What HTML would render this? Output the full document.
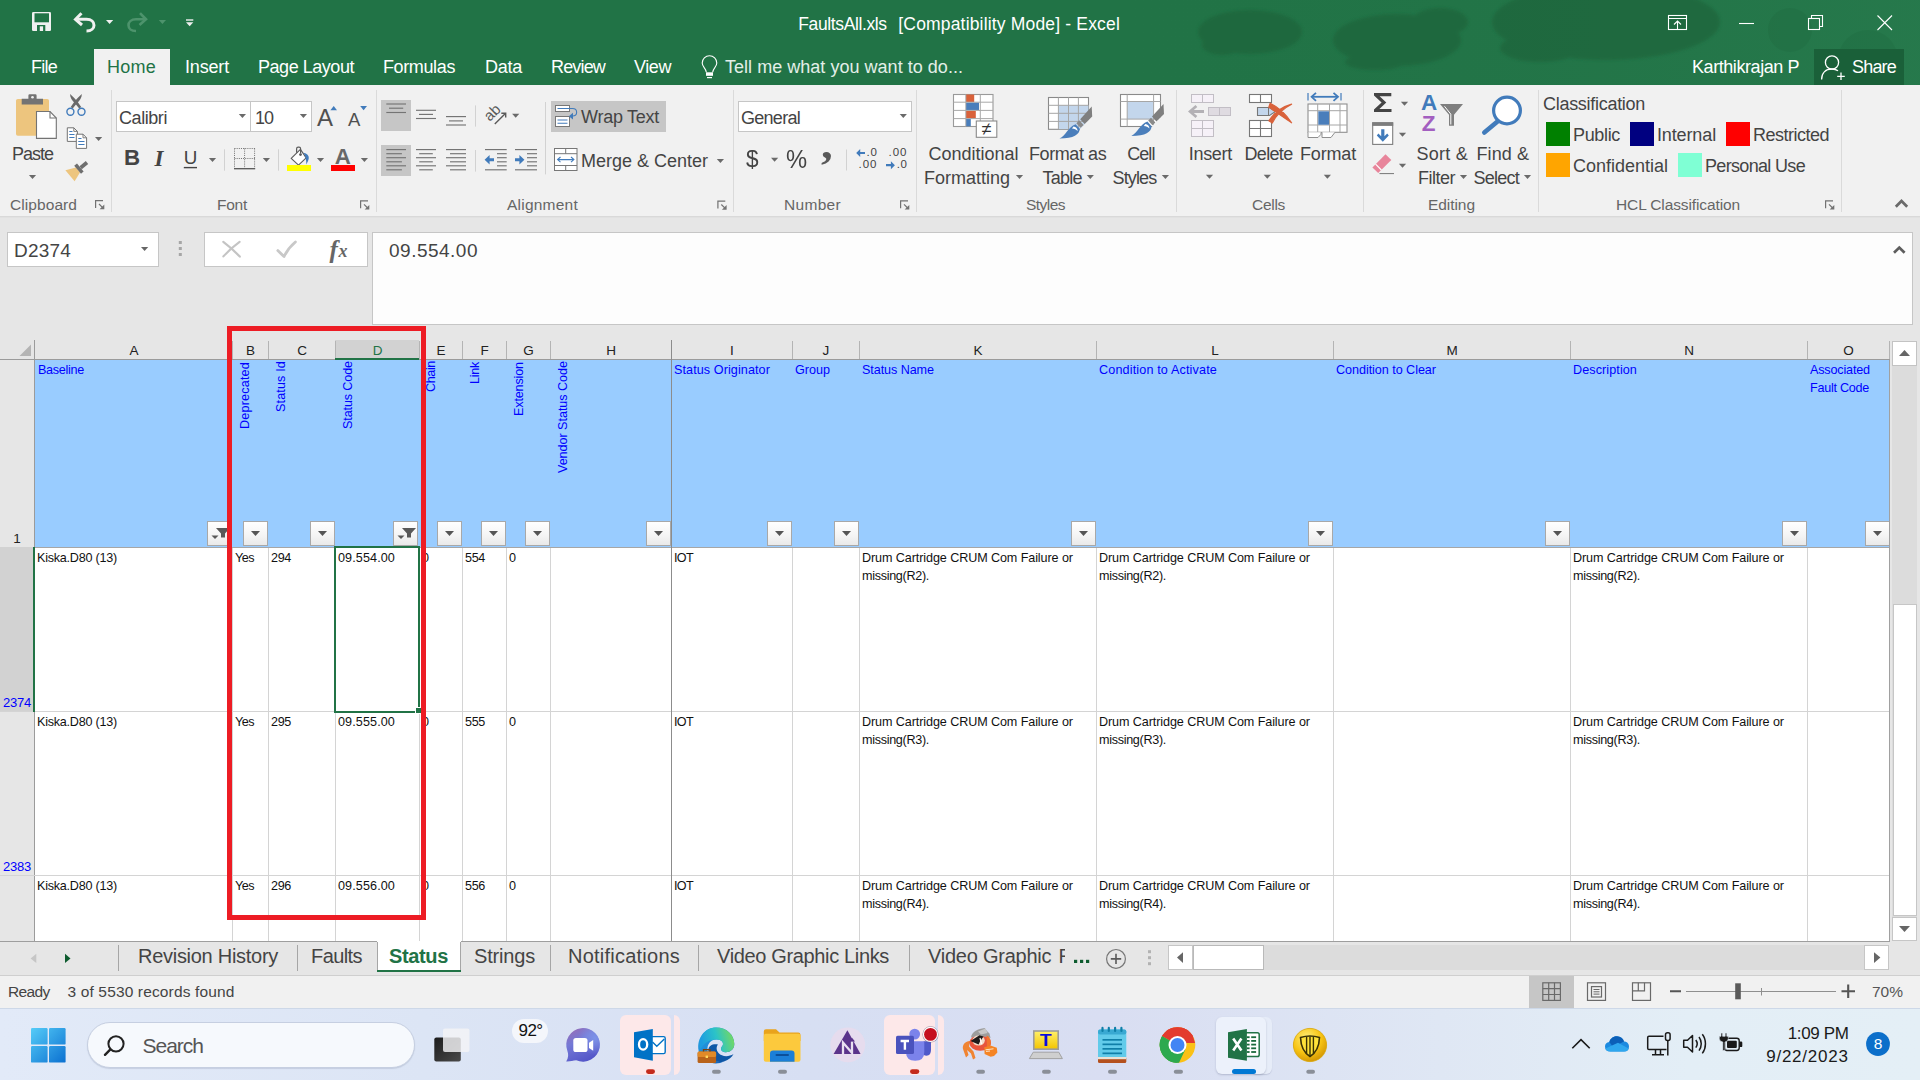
<!DOCTYPE html>
<html lang="en"><head><meta charset="utf-8"><title>FaultsAll.xls [Compatibility Mode] - Excel</title>
<style>
html,body{margin:0;padding:0;background:#fff;}
body{width:1920px;height:1080px;overflow:hidden;position:relative;font-family:"Liberation Sans",sans-serif;}
.a{position:absolute;box-sizing:border-box;display:block;}
.t{white-space:pre;}
svg{overflow:visible;}
</style></head><body>

<!-- title bar -->
<div class="a " style="left:0px;top:0px;width:1920px;height:85px;background:#217346;"></div>
<svg class="a" style="left:0;top:0" width="1920" height="85" viewBox="0 0 1920 85"><defs><linearGradient id="tg" x1="0" x2="1"><stop offset="0" stop-color="#217346" stop-opacity="0"/><stop offset="1" stop-color="#2a7d50" stop-opacity=".55"/></linearGradient></defs><rect x="1100" y="0" width="820" height="85" fill="url(#tg)"/><filter id="bl" x="-10%" y="-30%" width="120%" height="160%"><feGaussianBlur stdDeviation="1.6"/></filter><g fill="#1c6038" opacity=".55" filter="url(#bl)"><ellipse cx="1250" cy="32" rx="52" ry="22"/><ellipse cx="1222" cy="45" rx="20" ry="10"/><ellipse cx="1397" cy="40" rx="64" ry="26"/><ellipse cx="1440" cy="22" rx="28" ry="14"/><ellipse cx="1375" cy="62" rx="30" ry="8"/><ellipse cx="1606" cy="22" rx="114" ry="38"/><ellipse cx="1540" cy="48" rx="40" ry="14"/></g><g fill="#1f6b40" opacity=".35"><circle cx="1868" cy="60" r="30"/><circle cx="1790" cy="30" r="22"/></g></svg>
<span class="a t" style="left:798.30px;top:16.19px;font-size:17.5px;line-height:17.5px;color:#fff;letter-spacing:-0.381px;">FaultsAll.xls</span>
<span class="a t" style="left:898.30px;top:16.19px;font-size:17.5px;line-height:17.5px;color:#fff;letter-spacing:0.172px;">[Compatibility Mode] - Excel</span>
<div class="a " style="left:94px;top:49px;width:76px;height:37px;background:#f1f1f1;"></div>
<span class="a t" style="left:31.00px;top:58.26px;font-size:18px;line-height:18px;color:#fff;letter-spacing:-0.751px;">File</span>
<span class="a t" style="left:107.00px;top:58.26px;font-size:18px;line-height:18px;color:#217346;letter-spacing:0.246px;">Home</span>
<span class="a t" style="left:185.00px;top:58.26px;font-size:18px;line-height:18px;color:#fff;letter-spacing:-0.170px;">Insert</span>
<span class="a t" style="left:258.00px;top:58.26px;font-size:18px;line-height:18px;color:#fff;letter-spacing:-0.462px;">Page Layout</span>
<span class="a t" style="left:383.00px;top:58.26px;font-size:18px;line-height:18px;color:#fff;letter-spacing:-0.377px;">Formulas</span>
<span class="a t" style="left:485.00px;top:58.26px;font-size:18px;line-height:18px;color:#fff;letter-spacing:-0.256px;">Data</span>
<span class="a t" style="left:551.00px;top:58.26px;font-size:18px;line-height:18px;color:#fff;letter-spacing:-0.837px;">Review</span>
<span class="a t" style="left:634.00px;top:58.26px;font-size:18px;line-height:18px;color:#fff;letter-spacing:-0.423px;">View</span>
<span class="a t" style="left:725.00px;top:58.26px;font-size:18px;line-height:18px;color:#e3efe8;letter-spacing:0.029px;">Tell me what you want to do...</span>
<span class="a t" style="left:1692.00px;top:58.26px;font-size:18px;line-height:18px;color:#fff;letter-spacing:-0.433px;">Karthikrajan P</span>
<div class="a " style="left:1814px;top:49px;width:90px;height:36px;background:#1a6039;"></div>
<span class="a t" style="left:1852.00px;top:58.26px;font-size:18px;line-height:18px;color:#fff;letter-spacing:-0.807px;">Share</span>
<svg class="a" style="left:0;top:0" width="1920" height="85" viewBox="0 0 1920 85"><rect x="32" y="12" width="19" height="19" rx="1.2" fill="#f0f0f0"/><rect x="34.5" y="13.3" width="14.5" height="9" fill="#217346"/><rect x="37" y="25" width="8.3" height="6" fill="#217346"/><rect x="39.8" y="26.3" width="3.3" height="4.7" fill="#f0f0f0"/><g fill="none" stroke="#f0f0f0" stroke-width="3" stroke-linejoin="miter"><path d="M81.5 13.2L75.5 19.3L82 25"/><path d="M76.5 19.3H86.5C96.5 19.3 96.5 31 86.5 31" stroke-linecap="butt"/></g><path d="M106 20H113.2L109.6 24Z" fill="#f0f0f0"/><g fill="none" stroke="#4d936c" stroke-width="2.6"><path d="M140 13.2L146 19.3L139.5 25"/><path d="M145 19.3H136C126 19.3 126 31 136 31"/></g><path d="M158.8 20H166L162.4 24Z" fill="#4d936c"/><rect x="186" y="19.3" width="7.3" height="1.4" fill="#f0f0f0"/><path d="M186 22.2H193.3L189.65 26.2Z" fill="#f0f0f0"/><g fill="none" stroke="#fff" stroke-width="1.1"><path d="M706.3 72.2C706.3 68.5 702.2 67 702.2 63A7.3 7.3 0 0 1 716.8 63C716.8 67 712.7 68.5 712.7 72.2"/></g><rect x="706" y="72.3" width="7" height="3.5" fill="#fff"/><rect x="707" y="77" width="5" height="1.2" fill="#fff"/><g fill="none" stroke="#fff" stroke-width="1.1"><rect x="1668.5" y="15.5" width="18" height="14"/><path d="M1668.5 18.5H1686.5M1677.5 29V21.5M1674 24.5L1677.5 21L1681 24.5"/><path d="M1739 23.5H1754"/><rect x="1808.5" y="18.5" width="11" height="11"/><path d="M1811.5 18.5V15.5H1822.5V26.5H1819.5"/><path d="M1877.5 15.5L1892 30M1892 15.5L1877.5 30"/></g><g fill="none" stroke="#fff" stroke-width="1.3"><circle cx="1832" cy="62.5" r="6.6"/><path d="M1821.6 79.5C1821.6 72.5 1826 69 1832 69C1834.5 69 1836.5 69.7 1838 70.8"/><path d="M1841 72.5V80M1837.2 76.3H1844.8"/></g></svg>
<!-- ribbon -->
<div class="a " style="left:0px;top:85px;width:1920px;height:132px;background:#f1f1f1;"></div>
<div class="a " style="left:0px;top:216px;width:1920px;height:1px;background:#d9d9d9;"></div>
<div class="a " style="left:0px;top:217px;width:1920px;height:1px;background:#e1e1e1;"></div>
<div class="a " style="left:111px;top:90px;width:1px;height:122px;background:#dadada;"></div>
<div class="a " style="left:376px;top:90px;width:1px;height:122px;background:#dadada;"></div>
<div class="a " style="left:733px;top:90px;width:1px;height:122px;background:#dadada;"></div>
<div class="a " style="left:916px;top:90px;width:1px;height:122px;background:#dadada;"></div>
<div class="a " style="left:1176px;top:90px;width:1px;height:122px;background:#dadada;"></div>
<div class="a " style="left:1363px;top:90px;width:1px;height:122px;background:#dadada;"></div>
<div class="a " style="left:1538px;top:90px;width:1px;height:122px;background:#dadada;"></div>
<div class="a " style="left:1841px;top:90px;width:1px;height:122px;background:#dadada;"></div>
<span class="a t" style="left:10.00px;top:196.88px;font-size:15.5px;line-height:15.5px;color:#666;letter-spacing:0.073px;">Clipboard</span>
<span class="a t" style="left:217.00px;top:196.88px;font-size:15.5px;line-height:15.5px;color:#666;letter-spacing:-0.254px;">Font</span>
<span class="a t" style="left:507.00px;top:196.88px;font-size:15.5px;line-height:15.5px;color:#666;letter-spacing:0.230px;">Alignment</span>
<span class="a t" style="left:784.00px;top:196.88px;font-size:15.5px;line-height:15.5px;color:#666;letter-spacing:0.312px;">Number</span>
<span class="a t" style="left:1026.00px;top:196.88px;font-size:15.5px;line-height:15.5px;color:#666;letter-spacing:-0.535px;">Styles</span>
<span class="a t" style="left:1252.00px;top:196.88px;font-size:15.5px;line-height:15.5px;color:#666;letter-spacing:-0.290px;">Cells</span>
<span class="a t" style="left:1428.00px;top:196.88px;font-size:15.5px;line-height:15.5px;color:#666;letter-spacing:-0.056px;">Editing</span>
<span class="a t" style="left:1616.00px;top:196.88px;font-size:15.5px;line-height:15.5px;color:#666;letter-spacing:-0.114px;">HCL Classification</span>
<span class="a t" style="left:12.00px;top:145.26px;font-size:18px;line-height:18px;color:#444;letter-spacing:-1.006px;">Paste</span>
<div class="a " style="left:116px;top:101px;width:135px;height:31px;background:#fff;border:1px solid #c6c6c6;"></div>
<div class="a " style="left:250px;top:101px;width:62px;height:31px;background:#fff;border:1px solid #c6c6c6;"></div>
<span class="a t" style="left:119.00px;top:108.76px;font-size:18px;line-height:18px;color:#444;letter-spacing:-0.431px;">Calibri</span>
<span class="a t" style="left:255.00px;top:108.76px;font-size:18px;line-height:18px;color:#444;letter-spacing:-1.011px;">10</span>
<span class="a t" style="left:317.00px;top:105.98px;font-size:24px;line-height:24px;color:#505050;">A</span>
<span class="a t" style="left:348.00px;top:110.64px;font-size:18.5px;line-height:18.5px;color:#505050;">A</span>
<span class="a t" style="left:124.00px;top:147.12px;font-size:22.3px;line-height:22.3px;color:#444;font-weight:bold;">B</span>
<span class="a t" style="left:154.50px;top:146.73px;font-size:23px;line-height:23px;color:#444;font-weight:bold;font-style:italic;font-family:'Liberation Serif',serif;">I</span>
<span class="a t" style="left:183.80px;top:148.69px;font-size:18.8px;line-height:18.8px;color:#444;">U</span>
<span class="a t" style="left:334.80px;top:146.12px;font-size:22.3px;line-height:22.3px;color:#686868;font-weight:bold;">A</span>
<div class="a " style="left:381px;top:100px;width:30px;height:31px;background:#c6c6c6;"></div>
<div class="a " style="left:381px;top:145px;width:30px;height:31px;background:#c6c6c6;"></div>
<div class="a " style="left:551px;top:101px;width:115px;height:31px;background:#c6c6c6;"></div>
<span class="a t" style="left:581.00px;top:108.26px;font-size:18px;line-height:18px;color:#444;letter-spacing:-0.263px;">Wrap Text</span>
<span class="a t" style="left:581.00px;top:151.76px;font-size:18px;line-height:18px;color:#444;letter-spacing:-0.004px;">Merge &amp; Center</span>
<div class="a " style="left:738px;top:101px;width:174px;height:31px;background:#fff;border:1px solid #c6c6c6;"></div>
<span class="a t" style="left:741.00px;top:108.76px;font-size:18px;line-height:18px;color:#444;letter-spacing:-0.720px;">General</span>
<span class="a t" style="left:746.30px;top:147.26px;font-size:24.5px;line-height:24.5px;color:#444;transform:scaleX(.92);transform-origin:0 0;">$</span>
<span class="a t" style="left:785.80px;top:146.84px;font-size:25px;line-height:25px;color:#444;transform:scaleX(.95);transform-origin:0 0;">%</span>
<span class="a t" style="left:821.30px;top:123.25px;font-size:42px;line-height:42px;color:#595959;font-weight:bold;font-family:'Liberation Serif',serif;transform:scaleX(1.12);transform-origin:0 0;">,</span>
<span class="a t" style="left:866.50px;top:146.77px;font-size:11.5px;line-height:11.5px;color:#444;letter-spacing:0.705px;">.0</span>
<span class="a t" style="left:858.50px;top:159.07px;font-size:11.5px;line-height:11.5px;color:#444;letter-spacing:1.004px;">.00</span>
<span class="a t" style="left:888.50px;top:146.77px;font-size:11.5px;line-height:11.5px;color:#444;letter-spacing:1.004px;">.00</span>
<span class="a t" style="left:896.70px;top:159.07px;font-size:11.5px;line-height:11.5px;color:#444;letter-spacing:0.705px;">.0</span>
<span class="a t" style="left:928.40px;top:144.76px;font-size:18px;line-height:18px;color:#444;letter-spacing:0.012px;">Conditional</span>
<span class="a t" style="left:924.00px;top:168.76px;font-size:18px;line-height:18px;color:#444;letter-spacing:-0.003px;">Formatting</span>
<span class="a t" style="left:1029.00px;top:144.76px;font-size:18px;line-height:18px;color:#444;letter-spacing:-0.424px;">Format as</span>
<span class="a t" style="left:1042.50px;top:168.76px;font-size:18px;line-height:18px;color:#444;letter-spacing:-0.747px;">Table</span>
<span class="a t" style="left:1127.20px;top:144.76px;font-size:18px;line-height:18px;color:#444;letter-spacing:-0.927px;">Cell</span>
<span class="a t" style="left:1112.60px;top:168.76px;font-size:18px;line-height:18px;color:#444;letter-spacing:-0.886px;">Styles</span>
<span class="a t" style="left:1188.80px;top:144.76px;font-size:18px;line-height:18px;color:#444;letter-spacing:-0.336px;">Insert</span>
<span class="a t" style="left:1244.50px;top:144.76px;font-size:18px;line-height:18px;color:#444;letter-spacing:-0.672px;">Delete</span>
<span class="a t" style="left:1300.00px;top:144.76px;font-size:18px;line-height:18px;color:#444;letter-spacing:-0.168px;">Format</span>
<span class="a t" style="left:1416.50px;top:144.76px;font-size:18px;line-height:18px;color:#444;letter-spacing:0.247px;">Sort &amp;</span>
<span class="a t" style="left:1418.00px;top:168.76px;font-size:18px;line-height:18px;color:#444;letter-spacing:-0.500px;">Filter</span>
<span class="a t" style="left:1476.50px;top:144.76px;font-size:18px;line-height:18px;color:#444;letter-spacing:0.079px;">Find &amp;</span>
<span class="a t" style="left:1473.50px;top:168.76px;font-size:18px;line-height:18px;color:#444;letter-spacing:-0.755px;">Select</span>
<span class="a t" style="left:1421.00px;top:91.55px;font-size:22.5px;line-height:22.5px;color:#417bbb;font-weight:bold;">A</span>
<span class="a t" style="left:1421.80px;top:112.95px;font-size:22.5px;line-height:22.5px;color:#a35fc0;font-weight:bold;">Z</span>
<span class="a t" style="left:1543.00px;top:95.26px;font-size:18px;line-height:18px;color:#444;letter-spacing:-0.289px;">Classification</span>
<div class="a " style="left:1546px;top:122px;width:24px;height:24px;background:#008000;"></div>
<span class="a t" style="left:1573.00px;top:126.16px;font-size:18px;line-height:18px;color:#444;letter-spacing:-0.338px;">Public</span>
<div class="a " style="left:1630px;top:122px;width:24px;height:24px;background:#000080;"></div>
<span class="a t" style="left:1657.00px;top:126.16px;font-size:18px;line-height:18px;color:#444;letter-spacing:-0.130px;">Internal</span>
<div class="a " style="left:1726px;top:122px;width:24px;height:24px;background:#ff0000;"></div>
<span class="a t" style="left:1753.00px;top:126.16px;font-size:18px;line-height:18px;color:#444;letter-spacing:-0.503px;">Restricted</span>
<div class="a " style="left:1546px;top:153px;width:24px;height:24px;background:#ffa500;"></div>
<span class="a t" style="left:1573.00px;top:157.16px;font-size:18px;line-height:18px;color:#444;letter-spacing:-0.005px;">Confidential</span>
<div class="a " style="left:1678px;top:153px;width:24px;height:24px;background:#7fffd4;"></div>
<span class="a t" style="left:1705.00px;top:157.16px;font-size:18px;line-height:18px;color:#444;letter-spacing:-0.671px;">Personal Use</span>
<svg class="a" style="left:0;top:0" width="1920" height="218" viewBox="0 0 1920 218"><rect x="16" y="99" width="33" height="36.7" rx="1.8" fill="#edc57e"/><path d="M21.7 98.7H28.4V95.4Q28.4 94.2 29.6 94.2H35.4Q36.6 94.2 36.6 95.4V98.7H43V104.4H21.7Z" fill="#737373"/><circle cx="32.5" cy="97.3" r="1.3" fill="#f1f1f1"/><path d="M36.5 111.5H50L56.3 118V138.4H36.5Z" fill="#fff" stroke="#737373" stroke-width="1.1"/><path d="M50 111.5V118H56.3" fill="none" stroke="#737373" stroke-width="1.1"/><path d="M28.9 175.0H36.1L32.5 179.0Z" fill="#6a6a6a"/><path d="M70.1 93.9C69.8 97.5 72.3 100.6 74.9 103.2L79.2 108.4L81.2 107L77.4 101.6C75 98.8 72.5 96 70.1 93.9Z" fill="#6a6a6a"/><path d="M81.8 93.9C82.1 97.5 79.6 100.6 77 103.2L72.7 108.4L70.7 107L74.5 101.6C76.9 98.8 79.4 96 81.8 93.9Z" fill="#6a6a6a"/><g fill="none" stroke="#417bbb" stroke-width="1.4"><circle cx="70.4" cy="111.8" r="3.5"/><circle cx="81.5" cy="111.8" r="3.5"/></g><g fill="#fff" stroke="#737373" stroke-width="1"><path d="M67.3 127.8H73.8L77.4 131.4V141.4H67.3Z"/><path d="M76.3 134.2H83L86.6 137.8V148.4H76.3Z"/></g><g fill="none" stroke="#737373" stroke-width=".9"><path d="M73.8 127.8V131.4H77.4M83 134.2V137.8H86.6"/></g><g stroke="#417bbb" stroke-width="1"><path d="M69.3 131.5H72.5M69.3 134.5H74.5M69.3 137.5H74.5M78.3 138.5H81.5M78.3 141.5H84.5M78.3 144.5H84.5"/></g><path d="M95.0 137.0H102.2L98.6 141.0Z" fill="#6a6a6a"/><path d="M65.4 170.2L76 167.6L80 172.5L74.6 181.2Z" fill="#edc57e"/><path d="M74.2 165.8L77 163.6L83.6 171.4L81 173.8Z" fill="#6e6e6e"/><path d="M79.5 166.2L85.8 161L88.2 163.9L81.8 169.2Z" fill="#6e6e6e"/><g fill="none" stroke="#727272" stroke-width="1.2"><path d="M95.6 208V200.6H103"/><path d="M99 204L103.2 208.2"/></g><path d="M104.3 204.6V209.3H99.6Z" fill="#727272"/><path d="M238.8 114.0H246.0L242.4 118.0Z" fill="#6a6a6a"/><path d="M299.8 114.0H307.0L303.4 118.0Z" fill="#6a6a6a"/><path d="M330.4 110.2H337L333.7 106Z" fill="#417bbb"/><path d="M360.2 106H367L363.6 110.2Z" fill="#417bbb"/><path d="M183.8 167.6H197.0" stroke="#444" stroke-width="1.4"/><path d="M208.9 158.0H216.1L212.5 162.0Z" fill="#6a6a6a"/><path d="M262.8 158.0H270.0L266.4 162.0Z" fill="#6a6a6a"/><path d="M316.9 158.0H324.1L320.5 162.0Z" fill="#6a6a6a"/><path d="M360.8 158.0H368.0L364.4 162.0Z" fill="#6a6a6a"/><path d="M224.5 149.3V170.7M278.5 149.3V170.7" stroke="#d2d2d2" stroke-width="1"/><g stroke="#707070" stroke-width="1" stroke-dasharray="1 1.15" fill="none"><path d="M234.5 148.5H255M234.5 158.5H255M234.5 148.5V168M244.6 148.5V168M254.6 148.5V168"/></g><path d="M234 168.7H255.2" stroke="#555" stroke-width="1.3"/><path d="M291.2 158.4L300.4 149.4L306.2 157.8L298.5 165.2Z" fill="#fff" stroke="#5c5c5c" stroke-width="1.15" stroke-linejoin="round"/><path d="M296.6 152.8V148.8Q296.6 147.2 298.2 147.2H299Q300.6 147.2 300.6 148.8V153.6" fill="none" stroke="#5c5c5c" stroke-width="1.2"/><circle cx="300.5" cy="154.6" r="1.4" fill="#5c5c5c"/><path d="M303.6 152.8C307 153.6 309 155.6 308.8 158C308.6 160.5 307.2 162.5 306.3 164.6C306.4 160.5 305.8 156.5 303.6 152.8Z" fill="#417bbb"/><rect x="287" y="165" width="24" height="6" fill="#ffff00"/><rect x="331" y="165" width="24" height="6" fill="#ff0000"/><g fill="none" stroke="#727272" stroke-width="1.2"><path d="M360.6 208.3V200.9H368"/><path d="M364 204.3L368.2 208.5"/></g><path d="M369.3 204.9V209.60000000000002H364.6Z" fill="#727272"/><path d="M386.3 104.0H406.0" stroke="#747474" stroke-width="1.15"/><path d="M389.0 108.2H403.2" stroke="#747474" stroke-width="1.15"/><path d="M386.3 112.5H406.0" stroke="#747474" stroke-width="1.15"/><path d="M416.0 110.3H436.0" stroke="#747474" stroke-width="1.15"/><path d="M419.0 114.4H433.0" stroke="#747474" stroke-width="1.15"/><path d="M416.0 118.5H436.0" stroke="#747474" stroke-width="1.15"/><path d="M446.0 116.6H466.0" stroke="#747474" stroke-width="1.15"/><path d="M449.0 120.9H463.0" stroke="#747474" stroke-width="1.15"/><path d="M446.0 125.0H466.0" stroke="#747474" stroke-width="1.15"/><path d="M475.5 105.4V126.6M475.5 150V171.6M545.5 102V174.4" stroke="#d2d2d2" stroke-width="1"/><path d="M386.3 149.6H406.0" stroke="#747474" stroke-width="1.15"/><path d="M416.0 149.6H436.0" stroke="#747474" stroke-width="1.15"/><path d="M446.0 149.6H466.0" stroke="#747474" stroke-width="1.15"/><path d="M485.0 149.6H506.7" stroke="#747474" stroke-width="1.15"/><path d="M515.0 149.6H537.0" stroke="#747474" stroke-width="1.15"/><path d="M386.3 153.7H401.9" stroke="#747474" stroke-width="1.15"/><path d="M419.2 153.7H432.8" stroke="#747474" stroke-width="1.15"/><path d="M450.0 153.7H466.0" stroke="#747474" stroke-width="1.15"/><path d="M497.0 153.7H506.7" stroke="#747474" stroke-width="1.15"/><path d="M527.0 153.7H537.0" stroke="#747474" stroke-width="1.15"/><path d="M386.3 157.7H406.0" stroke="#747474" stroke-width="1.15"/><path d="M416.0 157.7H436.0" stroke="#747474" stroke-width="1.15"/><path d="M446.0 157.7H466.0" stroke="#747474" stroke-width="1.15"/><path d="M497.0 157.7H506.7" stroke="#747474" stroke-width="1.15"/><path d="M527.0 157.7H537.0" stroke="#747474" stroke-width="1.15"/><path d="M386.3 161.8H401.9" stroke="#747474" stroke-width="1.15"/><path d="M419.2 161.8H432.8" stroke="#747474" stroke-width="1.15"/><path d="M450.0 161.8H466.0" stroke="#747474" stroke-width="1.15"/><path d="M497.0 161.8H506.7" stroke="#747474" stroke-width="1.15"/><path d="M527.0 161.8H537.0" stroke="#747474" stroke-width="1.15"/><path d="M386.3 165.8H406.0" stroke="#747474" stroke-width="1.15"/><path d="M416.0 165.8H436.0" stroke="#747474" stroke-width="1.15"/><path d="M446.0 165.8H466.0" stroke="#747474" stroke-width="1.15"/><path d="M497.0 165.8H506.7" stroke="#747474" stroke-width="1.15"/><path d="M527.0 165.8H537.0" stroke="#747474" stroke-width="1.15"/><path d="M386.3 169.8H401.9" stroke="#747474" stroke-width="1.15"/><path d="M419.2 169.8H432.8" stroke="#747474" stroke-width="1.15"/><path d="M450.0 169.8H466.0" stroke="#747474" stroke-width="1.15"/><path d="M485.0 169.8H506.7" stroke="#747474" stroke-width="1.15"/><path d="M515.0 169.8H537.0" stroke="#747474" stroke-width="1.15"/><path d="M484.6 159.8L489.6 155V158.3H494V161.3H489.6V164.6Z" fill="#417bbb"/><path d="M524.4 159.8L519.4 155V158.3H515V161.3H519.4V164.6Z" fill="#417bbb"/><g transform="translate(493.2 113.6) rotate(-45)"><text x="-8.4" y="3.6" font-size="15" fill="#5a5a5a" font-family="Liberation Sans,sans-serif">ab</text></g><path d="M494.8 124L505.4 113.4M501.3 113.2H505.7V117.6" fill="none" stroke="#5a5a5a" stroke-width="1.4"/><path d="M512.1 113.7H519.3L515.7 117.7Z" fill="#6a6a6a"/><g fill="#fff" stroke="#777" stroke-width="1"><rect x="555.5" y="105.5" width="14" height="6"/><rect x="555.5" y="116.5" width="14" height="10"/></g><g stroke="#417bbb" stroke-width="1.1" fill="none"><path d="M557.5 108.5H572.5C578 108.5 578 116 572.5 116H571"/><path d="M557.5 120H567.5M557.5 123.3H567.5"/></g><path d="M568.8 116.2L573 112.8V119.6Z" fill="#417bbb"/><g fill="#fff" stroke="#777" stroke-width="1"><rect x="554.5" y="148.5" width="22.5" height="22"/><path d="M554.5 153.7H577M554.5 165.5H577M565.7 148.5V153.7M565.7 165.5V170.5" fill="none"/></g><path d="M558 159.6H573.5M560.5 157L557.6 159.6L560.5 162.2M571 157L573.9 159.6L571 162.2" fill="none" stroke="#417bbb" stroke-width="1.1"/><path d="M716.8 158.9H724.0L720.4 162.9Z" fill="#6a6a6a"/><g fill="none" stroke="#727272" stroke-width="1.2"><path d="M717.9 208.5V201.1H725.3"/><path d="M721.3 204.5L725.5 208.7"/></g><path d="M726.5999999999999 205.1V209.8H721.9Z" fill="#727272"/><path d="M899.7 114.0H906.9L903.3 118.0Z" fill="#6a6a6a"/><path d="M771.0 157.8H778.2L774.6 161.8Z" fill="#6a6a6a"/><path d="M846.5 149.5V170.5" stroke="#d2d2d2" stroke-width="1"/><path d="M856.2 153L860.2 149V151.9H865V154.1H860.2V157Z" fill="#417bbb"/><path d="M894.9 165.2L890.9 161.2V164.1H886V166.3H890.9V169.2Z" fill="#417bbb"/><g fill="none" stroke="#727272" stroke-width="1.2"><path d="M900.6 208.3V200.9H908"/><path d="M904 204.3L908.2 208.5"/></g><path d="M909.3 204.9V209.60000000000002H904.6Z" fill="#727272"/><rect x="953.5" y="94.5" width="39.5" height="32" fill="#fff" stroke="#9a9a9a" stroke-width="1.1"/><rect x="966" y="94.5" width="8.2" height="7.5" fill="#d9623b"/><rect x="966" y="102.5" width="13" height="7.5" fill="#4a7ebb"/><rect x="966" y="110.8" width="9.8" height="7.5" fill="#d9623b"/><rect x="966" y="119" width="4.8" height="7.3" fill="#4a7ebb"/><path d="M965.8 94.5V126.5M980.3 94.5V126.5M953.5 102.2H993M953.5 110.4H993M953.5 118.6H993" stroke="#a8a8a8" stroke-width="1" fill="none"/><rect x="976.3" y="121" width="20.5" height="16.3" fill="#fff" stroke="#8a8a8a" stroke-width="1.1"/><rect x="1048.5" y="97.5" width="40" height="31.8" fill="#fff" stroke="#8a8a8a" stroke-width="1.1"/><rect x="1058.4" y="105.3" width="30" height="23.8" fill="#c3d6ec"/><path d="M1058.4 97.5V129M1068.5 97.5V129M1078.4 97.5V129M1048.5 105.3H1088.5M1048.5 113.3H1088.5M1048.5 121.4H1088.5" stroke="#a6a6a6" stroke-width="1" fill="none"/><path d="M1070 140L1096 112V140Z" fill="#f1f1f1"/><g transform="translate(0,0)"><path d="M1091.7 106.5L1092.2 116.6L1084.6 124L1080.2 119.2Z" fill="#7f7f7f"/><path d="M1079.2 120.3L1083.6 125L1080.6 127.8L1076.4 123.2Z" fill="#8a8a8a"/><path d="M1075.6 124.2L1079.8 128.8C1079.5 134.5 1074 138.6 1059.5 138.6C1066 135.5 1068 127 1075.6 124.2Z" fill="#4a7ebb"/><path d="M1073.5 126.5C1076 126.8 1077.8 128.6 1077.6 131.2C1076.2 129.6 1074.4 128.6 1072 128.5Z" fill="#fff"/></g><rect x="1120.5" y="94.5" width="40" height="32" fill="#fff" stroke="#8a8a8a" stroke-width="1.1"/><rect x="1127.2" y="101.5" width="26.4" height="17.6" fill="#c3d6ec"/><path d="M1127.2 94.5V126.5M1153.6 94.5V126.5M1120.5 101.5H1160.5M1120.5 119.1H1160.5" stroke="#a6a6a6" stroke-width="1" fill="none"/><path d="M1142 137.5L1168 109V137.5Z" fill="#f1f1f1"/><g transform="translate(71.8,-2.6)"><path d="M1091.7 106.5L1092.2 116.6L1084.6 124L1080.2 119.2Z" fill="#7f7f7f"/><path d="M1079.2 120.3L1083.6 125L1080.6 127.8L1076.4 123.2Z" fill="#8a8a8a"/><path d="M1075.6 124.2L1079.8 128.8C1079.5 134.5 1074 138.6 1059.5 138.6C1066 135.5 1068 127 1075.6 124.2Z" fill="#4a7ebb"/><path d="M1073.5 126.5C1076 126.8 1077.8 128.6 1077.6 131.2C1076.2 129.6 1074.4 128.6 1072 128.5Z" fill="#fff"/></g><path d="M1015.9 175.0H1023.1L1019.5 179.0Z" fill="#6a6a6a"/><path d="M1086.7 175.0H1093.9L1090.3 179.0Z" fill="#6a6a6a"/><path d="M1161.8 175.0H1169.0L1165.4 179.0Z" fill="#6a6a6a"/><g fill="#f6f1f8" stroke="#c2bec5" stroke-width="1"><rect x="1191.5" y="94.5" width="22" height="8"/><rect x="1191.5" y="120.5" width="22" height="16"/></g><path d="M1202.5 94.5V102.5M1202.5 120.5V136.5M1191.5 128.5H1213.5" stroke="#c2bec5" fill="none"/><rect x="1208.5" y="107.5" width="22" height="8" fill="#dfdbe1" stroke="#c2bec5"/><path d="M1219.5 107.5V115.5" stroke="#c2bec5"/><path d="M1188 111.5L1195.5 105L1197.3 107L1193.8 110.1H1204V112.9H1193.8L1197.3 116L1195.5 118Z" fill="#b3b1b5"/><g fill="#fff" stroke="#777" stroke-width="1.1"><rect x="1249.5" y="94.5" width="22" height="8"/><rect x="1249.5" y="120.5" width="22" height="16"/></g><path d="M1260.5 94.5V102.5M1260.5 120.5V136.5M1249.5 128.5H1271.5" stroke="#777" stroke-width="1.1" fill="none"/><path d="M1257.5 107.5H1269.5L1275.5 111.5L1269.5 115.5H1257.5Z" fill="#c3d6ec" stroke="#777" stroke-width="1.1"/><path d="M1268.5 107.5V115.5" stroke="#777"/><path d="M1270.2 103.2C1279 107.5 1286 114 1291.6 122.8C1283.5 117.5 1277 112.5 1268.8 107.2ZM1291.6 104.2C1283 108.5 1276.5 114.5 1272.3 123L1268.8 120.8C1274 113 1281.5 107 1291.6 104.2Z" fill="#d9623b" stroke="#d9623b" stroke-width="1.2" stroke-linejoin="round"/><rect x="1308" y="104" width="39" height="28.3" fill="#fff" stroke="#8f8f8f" stroke-width="1.1"/><path d="M1317.7 104V132M1329.5 104V132M1340 104V132M1308 110.7H1347M1308 125H1347" stroke="#a6a6a6" fill="none"/><rect x="1318.3" y="111.3" width="10.7" height="13.4" fill="#4a7ebb"/><path d="M1308 132.3V137.5H1318L1321 134.3V132.3M1322 132.3V137.5H1331L1335 132.3" fill="#fff" stroke="#8f8f8f" stroke-width="1"/><path d="M1308 93V100.5M1341 93V100.5" stroke="#417bbb" stroke-width="1.2"/><path d="M1312 96.8H1338" stroke="#417bbb" stroke-width="1.8"/><path d="M1316 92.8L1311.6 96.8L1316 100.8M1333.5 92.8L1338 96.8L1333.5 100.8" fill="none" stroke="#417bbb" stroke-width="1.8"/><path d="M1205.9 174.8H1213.1L1209.5 178.8Z" fill="#6a6a6a"/><path d="M1263.7 174.8H1270.9L1267.3 178.8Z" fill="#6a6a6a"/><path d="M1323.8 174.8H1331.0L1327.4 178.8Z" fill="#6a6a6a"/><path d="M1374 93H1391.3V96.2H1379.6L1386.3 102.4L1379.4 109H1391.5V112H1374V109.6L1381.6 102.4L1374 95.4Z" fill="#444"/><path d="M1400.9 101.8H1408.1L1404.5 105.8Z" fill="#6a6a6a"/><rect x="1372.7" y="122.8" width="20" height="21.6" fill="#fff" stroke="#7d7d7d" stroke-width="1.1"/><rect x="1372.2" y="122.3" width="21" height="3.6" fill="#7d7d7d"/><path d="M1381.2 129.3H1384.4V136.2L1387.2 133.6L1388.8 135.5L1382.8 141.8L1376.8 135.5L1378.4 133.6L1381.2 136.2Z" fill="#417bbb"/><path d="M1398.9 132.8H1406.1L1402.5 136.8Z" fill="#6a6a6a"/><path d="M1385.5 154.3L1391.3 160L1378.2 173L1372.4 167.4Z" fill="#e8859b"/><path d="M1375.6 164.2L1381.4 170" stroke="#fff" stroke-width="1.2"/><path d="M1379.5 173.6H1394" stroke="#777" stroke-width="1"/><path d="M1398.9 163.8H1406.1L1402.5 167.8Z" fill="#6a6a6a"/><path d="M1440 104H1463L1454 114.8V125.7H1449V114.8Z" fill="#7f7f7f"/><path d="M1444.5 106.3L1450.8 114.2V124.5" fill="none" stroke="#fff" stroke-width="1"/><circle cx="1507" cy="110.5" r="13.4" fill="#fff" stroke="#417bbb" stroke-width="3.2"/><path d="M1497.5 121.5L1484.3 132.6" stroke="#417bbb" stroke-width="4.6" stroke-linecap="round"/><path d="M1459.9 175.0H1467.1L1463.5 179.0Z" fill="#6a6a6a"/><path d="M1523.9 175.0H1531.1L1527.5 179.0Z" fill="#6a6a6a"/><g fill="none" stroke="#727272" stroke-width="1.2"><path d="M1825.6 208.3V200.9H1833"/><path d="M1829 204.3L1833.2 208.5"/></g><path d="M1834.3 204.9V209.60000000000002H1829.6Z" fill="#727272"/><path d="M1895.8 206.8L1901.5 201L1907.2 206.8" fill="none" stroke="#6a6a6a" stroke-width="2.7"/></svg>
<span class="a t" style="left:981.66px;top:120.06px;font-size:18px;line-height:18px;color:#333;">≠</span>
<!-- formula bar -->
<div class="a " style="left:0px;top:218px;width:1920px;height:122px;background:#e6e6e6;"></div>
<div class="a " style="left:7px;top:232px;width:152px;height:35px;background:#fff;border:1px solid #c6c6c6;"></div>
<span class="a t" style="left:14.00px;top:240.92px;font-size:19px;line-height:19px;color:#444;letter-spacing:0.202px;">D2374</span>
<div class="a " style="left:204px;top:232px;width:164px;height:35px;background:#fff;border:1px solid #c6c6c6;"></div>
<div class="a " style="left:372px;top:232px;width:1541px;height:93px;background:#fdfdfd;border:1px solid #c6c6c6;"></div>
<span class="a t" style="left:389.00px;top:240.92px;font-size:19px;line-height:19px;color:#444;letter-spacing:0.497px;">09.554.00</span>
<span class="a t" style="left:329.50px;top:236.84px;font-size:25px;line-height:25px;color:#666;font-weight:bold;font-style:italic;font-family:'Liberation Serif',serif;">f</span>
<span class="a t" style="left:338.50px;top:242.26px;font-size:18px;line-height:18px;color:#666;font-weight:bold;font-style:italic;font-family:'Liberation Serif',serif;">x</span>
<svg class="a" style="left:0;top:218px" width="1920" height="122" viewBox="0 218 1920 122"><path d="M141 247H148.2L144.6 251Z" fill="#666"/><rect x="178.8" y="241" width="3" height="3" fill="#a6a6a6"/><rect x="178.8" y="247" width="3" height="3" fill="#a6a6a6"/><rect x="178.8" y="253" width="3" height="3" fill="#a6a6a6"/><path d="M223.3 241.8C229 246 234.5 251 239.8 256.6M239.6 241.8C233 246.5 228 251 223.4 256.4" fill="none" stroke="#c4c4c4" stroke-width="2.2" stroke-linecap="round"/><path d="M277.8 250.6L284 256.6C287 250.5 290.5 246 295.4 242" fill="none" stroke="#c8c8c8" stroke-width="2.8" stroke-linecap="round" stroke-linejoin="round"/><path d="M1894 252.8L1899.3 247.6L1904.6 252.8" fill="none" stroke="#5e5e5e" stroke-width="2.7"/></svg>
<!-- grid -->
<div class="a " style="left:0px;top:340px;width:1890px;height:601px;background:#fff;"></div>
<div class="a " style="left:0px;top:340px;width:1890px;height:20px;background:#e6e6e6;"></div>
<div class="a " style="left:0px;top:360px;width:35px;height:581px;background:#e6e6e6;"></div>
<div class="a " style="left:35px;top:360px;width:1854px;height:187px;background:#99ccff;"></div>
<div class="a " style="left:335px;top:340px;width:84px;height:20px;background:#d2d2d2;"></div>
<div class="a " style="left:0px;top:547px;width:34px;height:165px;background:#d2d2d2;"></div>
<span class="a t" style="left:129.50px;top:344.17px;font-size:13.5px;line-height:13.5px;color:#222;">A</span>
<div class="a " style="left:232px;top:341px;width:1px;height:18px;background:#b4b4b4;"></div>
<span class="a t" style="left:246.00px;top:344.17px;font-size:13.5px;line-height:13.5px;color:#222;">B</span>
<div class="a " style="left:268px;top:341px;width:1px;height:18px;background:#b4b4b4;"></div>
<span class="a t" style="left:297.13px;top:344.17px;font-size:13.5px;line-height:13.5px;color:#222;">C</span>
<div class="a " style="left:335px;top:341px;width:1px;height:18px;background:#b4b4b4;"></div>
<span class="a t" style="left:372.63px;top:344.17px;font-size:13.5px;line-height:13.5px;color:#217346;">D</span>
<div class="a " style="left:419px;top:341px;width:1px;height:18px;background:#b4b4b4;"></div>
<span class="a t" style="left:436.50px;top:344.17px;font-size:13.5px;line-height:13.5px;color:#222;">E</span>
<div class="a " style="left:462px;top:341px;width:1px;height:18px;background:#b4b4b4;"></div>
<span class="a t" style="left:480.38px;top:344.17px;font-size:13.5px;line-height:13.5px;color:#222;">F</span>
<div class="a " style="left:506px;top:341px;width:1px;height:18px;background:#b4b4b4;"></div>
<span class="a t" style="left:523.25px;top:344.17px;font-size:13.5px;line-height:13.5px;color:#222;">G</span>
<div class="a " style="left:550px;top:341px;width:1px;height:18px;background:#b4b4b4;"></div>
<span class="a t" style="left:606.13px;top:344.17px;font-size:13.5px;line-height:13.5px;color:#222;">H</span>
<div class="a " style="left:671px;top:341px;width:1px;height:18px;background:#b4b4b4;"></div>
<span class="a t" style="left:730.12px;top:344.17px;font-size:13.5px;line-height:13.5px;color:#222;">I</span>
<div class="a " style="left:792px;top:341px;width:1px;height:18px;background:#b4b4b4;"></div>
<span class="a t" style="left:822.62px;top:344.17px;font-size:13.5px;line-height:13.5px;color:#222;">J</span>
<div class="a " style="left:859px;top:341px;width:1px;height:18px;background:#b4b4b4;"></div>
<span class="a t" style="left:973.50px;top:344.17px;font-size:13.5px;line-height:13.5px;color:#222;">K</span>
<div class="a " style="left:1096px;top:341px;width:1px;height:18px;background:#b4b4b4;"></div>
<span class="a t" style="left:1211.25px;top:344.17px;font-size:13.5px;line-height:13.5px;color:#222;">L</span>
<div class="a " style="left:1333px;top:341px;width:1px;height:18px;background:#b4b4b4;"></div>
<span class="a t" style="left:1446.38px;top:344.17px;font-size:13.5px;line-height:13.5px;color:#222;">M</span>
<div class="a " style="left:1570px;top:341px;width:1px;height:18px;background:#b4b4b4;"></div>
<span class="a t" style="left:1684.13px;top:344.17px;font-size:13.5px;line-height:13.5px;color:#222;">N</span>
<div class="a " style="left:1807px;top:341px;width:1px;height:18px;background:#b4b4b4;"></div>
<span class="a t" style="left:1843.25px;top:344.17px;font-size:13.5px;line-height:13.5px;color:#222;">O</span>
<div class="a " style="left:1889px;top:341px;width:1px;height:18px;background:#b4b4b4;"></div>
<svg class="a" style="left:19px;top:344px;" width="12" height="12" viewBox="0 0 12 12"><path d="M12 0.5V12H0.5Z" fill="#b4b4b4"/></svg>
<div class="a " style="left:34px;top:340px;width:1px;height:601px;background:#9b9b9b;"></div>
<div class="a " style="left:0px;top:359px;width:1890px;height:1px;background:#9b9b9b;"></div>
<div class="a " style="left:335px;top:358px;width:84px;height:2px;background:#217346;"></div>
<div class="a " style="left:232px;top:548px;width:1px;height:393px;background:#d4d4d4;"></div>
<div class="a " style="left:268px;top:548px;width:1px;height:393px;background:#d4d4d4;"></div>
<div class="a " style="left:335px;top:548px;width:1px;height:393px;background:#d4d4d4;"></div>
<div class="a " style="left:419px;top:548px;width:1px;height:393px;background:#d4d4d4;"></div>
<div class="a " style="left:462px;top:548px;width:1px;height:393px;background:#d4d4d4;"></div>
<div class="a " style="left:506px;top:548px;width:1px;height:393px;background:#d4d4d4;"></div>
<div class="a " style="left:550px;top:548px;width:1px;height:393px;background:#d4d4d4;"></div>
<div class="a " style="left:671px;top:548px;width:1px;height:393px;background:#d4d4d4;"></div>
<div class="a " style="left:792px;top:548px;width:1px;height:393px;background:#d4d4d4;"></div>
<div class="a " style="left:859px;top:548px;width:1px;height:393px;background:#d4d4d4;"></div>
<div class="a " style="left:1096px;top:548px;width:1px;height:393px;background:#d4d4d4;"></div>
<div class="a " style="left:1333px;top:548px;width:1px;height:393px;background:#d4d4d4;"></div>
<div class="a " style="left:1570px;top:548px;width:1px;height:393px;background:#d4d4d4;"></div>
<div class="a " style="left:1807px;top:548px;width:1px;height:393px;background:#d4d4d4;"></div>
<div class="a " style="left:1889px;top:548px;width:1px;height:393px;background:#d4d4d4;"></div>
<div class="a " style="left:0px;top:711px;width:1889px;height:1px;background:#d4d4d4;"></div>
<div class="a " style="left:0px;top:875px;width:1889px;height:1px;background:#d4d4d4;"></div>
<div class="a " style="left:35px;top:547px;width:1854px;height:1px;background:#a6a6a6;"></div>
<div class="a " style="left:671px;top:340px;width:1px;height:601px;background:#8c8c8c;"></div>
<div class="a " style="left:1889px;top:360px;width:1px;height:581px;background:#a0a0a0;"></div>
<span class="a t" style="left:13.25px;top:531.57px;font-size:13.5px;line-height:13.5px;color:#222;">1</span>
<span class="a t" style="left:3.00px;top:696.00px;font-size:13px;line-height:13px;color:#0000ff;letter-spacing:-0.230px;">2374</span>
<span class="a t" style="left:3.00px;top:860.00px;font-size:13px;line-height:13px;color:#0000ff;letter-spacing:-0.230px;">2383</span>
<div class="a " style="left:33px;top:547px;width:2px;height:165px;background:#217346;"></div>
<span class="a t" style="left:38.00px;top:364.33px;font-size:12.6px;line-height:12.6px;color:#0000ff;letter-spacing:-0.292px;">Baseline</span>
<span class="a t" style="left:674.00px;top:364.33px;font-size:12.6px;line-height:12.6px;color:#0000ff;letter-spacing:0.086px;">Status Originator</span>
<span class="a t" style="left:795.00px;top:364.33px;font-size:12.6px;line-height:12.6px;color:#0000ff;letter-spacing:-0.004px;">Group</span>
<span class="a t" style="left:862.00px;top:364.33px;font-size:12.6px;line-height:12.6px;color:#0000ff;letter-spacing:-0.076px;">Status Name</span>
<span class="a t" style="left:1099.00px;top:364.33px;font-size:12.6px;line-height:12.6px;color:#0000ff;letter-spacing:0.149px;">Condition to Activate</span>
<span class="a t" style="left:1336.00px;top:364.33px;font-size:12.6px;line-height:12.6px;color:#0000ff;letter-spacing:-0.048px;">Condition to Clear</span>
<span class="a t" style="left:1573.00px;top:364.33px;font-size:12.6px;line-height:12.6px;color:#0000ff;letter-spacing:0.088px;">Description</span>
<span class="a t" style="left:1810.00px;top:364.33px;font-size:12.6px;line-height:12.6px;color:#0000ff;letter-spacing:-0.164px;">Associated</span>
<span class="a t" style="left:1810.00px;top:382.33px;font-size:12.6px;line-height:12.6px;color:#0000ff;letter-spacing:-0.264px;">Fault Code</span>
<span class="a t" style="left:238.90px;top:429px;font-size:12.6px;line-height:12.6px;color:#0000ff;letter-spacing:0.186px;transform-origin:0 0;transform:rotate(-90deg);">Deprecated</span>
<span class="a t" style="left:274.90px;top:412px;font-size:12.6px;line-height:12.6px;color:#0000ff;letter-spacing:0.141px;transform-origin:0 0;transform:rotate(-90deg);">Status Id</span>
<span class="a t" style="left:341.90px;top:429px;font-size:12.6px;line-height:12.6px;color:#0000ff;letter-spacing:-0.122px;transform-origin:0 0;transform:rotate(-90deg);">Status Code</span>
<span class="a t" style="left:425.40px;top:392px;font-size:12.6px;line-height:12.6px;color:#0000ff;letter-spacing:-0.384px;transform-origin:0 0;transform:rotate(-90deg);">Chain</span>
<span class="a t" style="left:469.40px;top:384px;font-size:12.6px;line-height:12.6px;color:#0000ff;letter-spacing:-0.279px;transform-origin:0 0;transform:rotate(-90deg);">Link</span>
<span class="a t" style="left:513.40px;top:416px;font-size:12.6px;line-height:12.6px;color:#0000ff;letter-spacing:-0.148px;transform-origin:0 0;transform:rotate(-90deg);">Extension</span>
<span class="a t" style="left:557.40px;top:473px;font-size:12.6px;line-height:12.6px;color:#0000ff;letter-spacing:-0.043px;transform-origin:0 0;transform:rotate(-90deg);">Vendor Status Code</span>
<div class="a" style="left:207px;top:521px;width:25px;height:25px;background:linear-gradient(#fff,#f4f4f4 60%,#e9e9e9);border:1px solid #a8a8a8;"></div>
<svg class="a" style="left:211px;top:527px;" width="19" height="13" viewBox="0 0 19 13"><path d="M5 1H19L14 6.5V10.5H10V6.5Z" fill="#595959"/><path d="M0.5 8.5H7.5L4 12Z" fill="#595959"/></svg>
<div class="a" style="left:243px;top:521px;width:25px;height:25px;background:linear-gradient(#fff,#f4f4f4 60%,#e9e9e9);border:1px solid #a8a8a8;"></div>
<svg class="a" style="left:251px;top:531px;" width="9" height="5" viewBox="0 0 9 5"><path d="M0 0H9L4.5 5Z" fill="#555"/></svg>
<div class="a" style="left:310px;top:521px;width:25px;height:25px;background:linear-gradient(#fff,#f4f4f4 60%,#e9e9e9);border:1px solid #a8a8a8;"></div>
<svg class="a" style="left:318px;top:531px;" width="9" height="5" viewBox="0 0 9 5"><path d="M0 0H9L4.5 5Z" fill="#555"/></svg>
<div class="a" style="left:393px;top:521px;width:25px;height:25px;background:linear-gradient(#fff,#f4f4f4 60%,#e9e9e9);border:1px solid #a8a8a8;"></div>
<svg class="a" style="left:397px;top:527px;" width="19" height="13" viewBox="0 0 19 13"><path d="M5 1H19L14 6.5V10.5H10V6.5Z" fill="#595959"/><path d="M0.5 8.5H7.5L4 12Z" fill="#595959"/></svg>
<div class="a" style="left:437px;top:521px;width:25px;height:25px;background:linear-gradient(#fff,#f4f4f4 60%,#e9e9e9);border:1px solid #a8a8a8;"></div>
<svg class="a" style="left:445px;top:531px;" width="9" height="5" viewBox="0 0 9 5"><path d="M0 0H9L4.5 5Z" fill="#555"/></svg>
<div class="a" style="left:481px;top:521px;width:25px;height:25px;background:linear-gradient(#fff,#f4f4f4 60%,#e9e9e9);border:1px solid #a8a8a8;"></div>
<svg class="a" style="left:489px;top:531px;" width="9" height="5" viewBox="0 0 9 5"><path d="M0 0H9L4.5 5Z" fill="#555"/></svg>
<div class="a" style="left:525px;top:521px;width:25px;height:25px;background:linear-gradient(#fff,#f4f4f4 60%,#e9e9e9);border:1px solid #a8a8a8;"></div>
<svg class="a" style="left:533px;top:531px;" width="9" height="5" viewBox="0 0 9 5"><path d="M0 0H9L4.5 5Z" fill="#555"/></svg>
<div class="a" style="left:646px;top:521px;width:25px;height:25px;background:linear-gradient(#fff,#f4f4f4 60%,#e9e9e9);border:1px solid #a8a8a8;"></div>
<svg class="a" style="left:654px;top:531px;" width="9" height="5" viewBox="0 0 9 5"><path d="M0 0H9L4.5 5Z" fill="#555"/></svg>
<div class="a" style="left:767px;top:521px;width:25px;height:25px;background:linear-gradient(#fff,#f4f4f4 60%,#e9e9e9);border:1px solid #a8a8a8;"></div>
<svg class="a" style="left:775px;top:531px;" width="9" height="5" viewBox="0 0 9 5"><path d="M0 0H9L4.5 5Z" fill="#555"/></svg>
<div class="a" style="left:834px;top:521px;width:25px;height:25px;background:linear-gradient(#fff,#f4f4f4 60%,#e9e9e9);border:1px solid #a8a8a8;"></div>
<svg class="a" style="left:842px;top:531px;" width="9" height="5" viewBox="0 0 9 5"><path d="M0 0H9L4.5 5Z" fill="#555"/></svg>
<div class="a" style="left:1071px;top:521px;width:25px;height:25px;background:linear-gradient(#fff,#f4f4f4 60%,#e9e9e9);border:1px solid #a8a8a8;"></div>
<svg class="a" style="left:1079px;top:531px;" width="9" height="5" viewBox="0 0 9 5"><path d="M0 0H9L4.5 5Z" fill="#555"/></svg>
<div class="a" style="left:1308px;top:521px;width:25px;height:25px;background:linear-gradient(#fff,#f4f4f4 60%,#e9e9e9);border:1px solid #a8a8a8;"></div>
<svg class="a" style="left:1316px;top:531px;" width="9" height="5" viewBox="0 0 9 5"><path d="M0 0H9L4.5 5Z" fill="#555"/></svg>
<div class="a" style="left:1545px;top:521px;width:25px;height:25px;background:linear-gradient(#fff,#f4f4f4 60%,#e9e9e9);border:1px solid #a8a8a8;"></div>
<svg class="a" style="left:1553px;top:531px;" width="9" height="5" viewBox="0 0 9 5"><path d="M0 0H9L4.5 5Z" fill="#555"/></svg>
<div class="a" style="left:1782px;top:521px;width:25px;height:25px;background:linear-gradient(#fff,#f4f4f4 60%,#e9e9e9);border:1px solid #a8a8a8;"></div>
<svg class="a" style="left:1790px;top:531px;" width="9" height="5" viewBox="0 0 9 5"><path d="M0 0H9L4.5 5Z" fill="#555"/></svg>
<div class="a" style="left:1865px;top:521px;width:24px;height:25px;background:linear-gradient(#fff,#f4f4f4 60%,#e9e9e9);border:1px solid #a8a8a8;border-right:0;"></div>
<svg class="a" style="left:1873px;top:531px;" width="9" height="5" viewBox="0 0 9 5"><path d="M0 0H9L4.5 5Z" fill="#555"/></svg>
<span class="a t" style="left:37.00px;top:551.93px;font-size:12.6px;line-height:12.6px;color:#111;letter-spacing:-0.238px;">Kiska.D80 (13)</span>
<span class="a t" style="left:235.00px;top:551.93px;font-size:12.6px;line-height:12.6px;color:#111;letter-spacing:-0.519px;">Yes</span>
<span class="a t" style="left:271.00px;top:551.93px;font-size:12.6px;line-height:12.6px;color:#111;letter-spacing:-0.341px;">294</span>
<span class="a t" style="left:338.00px;top:551.93px;font-size:12.6px;line-height:12.6px;color:#111;letter-spacing:0.105px;">09.554.00</span>
<span class="a t" style="left:422.00px;top:551.93px;font-size:12.6px;line-height:12.6px;color:#111;">0</span>
<span class="a t" style="left:465.00px;top:551.93px;font-size:12.6px;line-height:12.6px;color:#111;letter-spacing:-0.341px;">554</span>
<span class="a t" style="left:509.00px;top:551.93px;font-size:12.6px;line-height:12.6px;color:#111;">0</span>
<span class="a t" style="left:674.00px;top:551.93px;font-size:12.6px;line-height:12.6px;color:#111;letter-spacing:-0.666px;">IOT</span>
<span class="a t" style="left:862.00px;top:551.93px;font-size:12.6px;line-height:12.6px;color:#111;letter-spacing:-0.095px;">Drum Cartridge CRUM Com Failure or</span>
<span class="a t" style="left:862.00px;top:569.93px;font-size:12.6px;line-height:12.6px;color:#111;letter-spacing:-0.309px;">missing(R2).</span>
<span class="a t" style="left:1099.00px;top:551.93px;font-size:12.6px;line-height:12.6px;color:#111;letter-spacing:-0.095px;">Drum Cartridge CRUM Com Failure or</span>
<span class="a t" style="left:1099.00px;top:569.93px;font-size:12.6px;line-height:12.6px;color:#111;letter-spacing:-0.309px;">missing(R2).</span>
<span class="a t" style="left:1573.00px;top:551.93px;font-size:12.6px;line-height:12.6px;color:#111;letter-spacing:-0.095px;">Drum Cartridge CRUM Com Failure or</span>
<span class="a t" style="left:1573.00px;top:569.93px;font-size:12.6px;line-height:12.6px;color:#111;letter-spacing:-0.309px;">missing(R2).</span>
<span class="a t" style="left:37.00px;top:715.93px;font-size:12.6px;line-height:12.6px;color:#111;letter-spacing:-0.238px;">Kiska.D80 (13)</span>
<span class="a t" style="left:235.00px;top:715.93px;font-size:12.6px;line-height:12.6px;color:#111;letter-spacing:-0.519px;">Yes</span>
<span class="a t" style="left:271.00px;top:715.93px;font-size:12.6px;line-height:12.6px;color:#111;letter-spacing:-0.341px;">295</span>
<span class="a t" style="left:338.00px;top:715.93px;font-size:12.6px;line-height:12.6px;color:#111;letter-spacing:0.105px;">09.555.00</span>
<span class="a t" style="left:422.00px;top:715.93px;font-size:12.6px;line-height:12.6px;color:#111;">0</span>
<span class="a t" style="left:465.00px;top:715.93px;font-size:12.6px;line-height:12.6px;color:#111;letter-spacing:-0.341px;">555</span>
<span class="a t" style="left:509.00px;top:715.93px;font-size:12.6px;line-height:12.6px;color:#111;">0</span>
<span class="a t" style="left:674.00px;top:715.93px;font-size:12.6px;line-height:12.6px;color:#111;letter-spacing:-0.666px;">IOT</span>
<span class="a t" style="left:862.00px;top:715.93px;font-size:12.6px;line-height:12.6px;color:#111;letter-spacing:-0.095px;">Drum Cartridge CRUM Com Failure or</span>
<span class="a t" style="left:862.00px;top:733.93px;font-size:12.6px;line-height:12.6px;color:#111;letter-spacing:-0.309px;">missing(R3).</span>
<span class="a t" style="left:1099.00px;top:715.93px;font-size:12.6px;line-height:12.6px;color:#111;letter-spacing:-0.095px;">Drum Cartridge CRUM Com Failure or</span>
<span class="a t" style="left:1099.00px;top:733.93px;font-size:12.6px;line-height:12.6px;color:#111;letter-spacing:-0.309px;">missing(R3).</span>
<span class="a t" style="left:1573.00px;top:715.93px;font-size:12.6px;line-height:12.6px;color:#111;letter-spacing:-0.095px;">Drum Cartridge CRUM Com Failure or</span>
<span class="a t" style="left:1573.00px;top:733.93px;font-size:12.6px;line-height:12.6px;color:#111;letter-spacing:-0.309px;">missing(R3).</span>
<span class="a t" style="left:37.00px;top:879.93px;font-size:12.6px;line-height:12.6px;color:#111;letter-spacing:-0.238px;">Kiska.D80 (13)</span>
<span class="a t" style="left:235.00px;top:879.93px;font-size:12.6px;line-height:12.6px;color:#111;letter-spacing:-0.519px;">Yes</span>
<span class="a t" style="left:271.00px;top:879.93px;font-size:12.6px;line-height:12.6px;color:#111;letter-spacing:-0.341px;">296</span>
<span class="a t" style="left:338.00px;top:879.93px;font-size:12.6px;line-height:12.6px;color:#111;letter-spacing:0.105px;">09.556.00</span>
<span class="a t" style="left:422.00px;top:879.93px;font-size:12.6px;line-height:12.6px;color:#111;">0</span>
<span class="a t" style="left:465.00px;top:879.93px;font-size:12.6px;line-height:12.6px;color:#111;letter-spacing:-0.341px;">556</span>
<span class="a t" style="left:509.00px;top:879.93px;font-size:12.6px;line-height:12.6px;color:#111;">0</span>
<span class="a t" style="left:674.00px;top:879.93px;font-size:12.6px;line-height:12.6px;color:#111;letter-spacing:-0.666px;">IOT</span>
<span class="a t" style="left:862.00px;top:879.93px;font-size:12.6px;line-height:12.6px;color:#111;letter-spacing:-0.095px;">Drum Cartridge CRUM Com Failure or</span>
<span class="a t" style="left:862.00px;top:897.93px;font-size:12.6px;line-height:12.6px;color:#111;letter-spacing:-0.309px;">missing(R4).</span>
<span class="a t" style="left:1099.00px;top:879.93px;font-size:12.6px;line-height:12.6px;color:#111;letter-spacing:-0.095px;">Drum Cartridge CRUM Com Failure or</span>
<span class="a t" style="left:1099.00px;top:897.93px;font-size:12.6px;line-height:12.6px;color:#111;letter-spacing:-0.309px;">missing(R4).</span>
<span class="a t" style="left:1573.00px;top:879.93px;font-size:12.6px;line-height:12.6px;color:#111;letter-spacing:-0.095px;">Drum Cartridge CRUM Com Failure or</span>
<span class="a t" style="left:1573.00px;top:897.93px;font-size:12.6px;line-height:12.6px;color:#111;letter-spacing:-0.309px;">missing(R4).</span>
<div class="a " style="left:334px;top:546px;width:86px;height:167px;border:2px solid #217346;"></div>
<div class="a " style="left:415px;top:707px;width:7px;height:7px;background:#217346;border:1px solid #fff;"></div>
<div class="a " style="left:227px;top:326px;width:199px;height:594px;border:5px solid #ed1c24;"></div>
<div class="a " style="left:1890px;top:340px;width:30px;height:601px;background:#e6e6e6;"></div>
<div class="a " style="left:1892px;top:366px;width:25px;height:551px;background:#dcdcdc;"></div>
<div class="a " style="left:1892px;top:341px;width:25px;height:25px;background:#fff;border:1px solid #c3c3c3;"></div>
<svg class="a" style="left:1899px;top:350px;" width="11" height="6" viewBox="0 0 11 6"><path d="M0 6H11L5.5 0Z" fill="#666"/></svg>
<div class="a " style="left:1893px;top:604px;width:24px;height:312px;background:#fff;border:1px solid #c6c6c6;"></div>
<div class="a " style="left:1892px;top:917px;width:25px;height:24px;background:#fff;border:1px solid #c6c6c6;"></div>
<svg class="a" style="left:1899px;top:926px;" width="11" height="6" viewBox="0 0 11 6"><path d="M0 0H11L5.5 6Z" fill="#666"/></svg>
<!-- sheet tabs + status bar -->
<div class="a " style="left:0px;top:941px;width:1920px;height:35px;background:#e6e6e6;"></div>
<div class="a " style="left:0px;top:941px;width:1890px;height:1px;background:#9e9e9e;"></div>
<div class="a " style="left:0px;top:975px;width:1920px;height:1px;background:#cfcfcf;"></div>
<div class="a " style="left:377px;top:941px;width:84px;height:31px;background:#fff;"></div>
<div class="a " style="left:377px;top:942px;width:1px;height:30px;background:#a6a6a6;"></div>
<div class="a " style="left:460px;top:942px;width:1px;height:30px;background:#a6a6a6;"></div>
<div class="a " style="left:377px;top:970px;width:84px;height:2px;background:#217346;"></div>
<div class="a " style="left:118px;top:945px;width:1px;height:26px;background:#a6a6a6;"></div>
<div class="a " style="left:297px;top:945px;width:1px;height:26px;background:#a6a6a6;"></div>
<div class="a " style="left:550px;top:945px;width:1px;height:26px;background:#a6a6a6;"></div>
<div class="a " style="left:698px;top:945px;width:1px;height:26px;background:#a6a6a6;"></div>
<div class="a " style="left:909px;top:945px;width:1px;height:26px;background:#a6a6a6;"></div>
<span class="a t" style="left:138.00px;top:945.87px;font-size:20px;line-height:20px;color:#444;letter-spacing:-0.280px;">Revision History</span>
<span class="a t" style="left:311.00px;top:945.87px;font-size:20px;line-height:20px;color:#444;letter-spacing:-0.577px;">Faults</span>
<span class="a t" style="left:389.00px;top:945.87px;font-size:20px;line-height:20px;color:#217346;letter-spacing:-0.354px;font-weight:bold;">Status</span>
<span class="a t" style="left:474.00px;top:945.87px;font-size:20px;line-height:20px;color:#444;letter-spacing:-0.178px;">Strings</span>
<span class="a t" style="left:568.00px;top:945.87px;font-size:20px;line-height:20px;color:#444;letter-spacing:0.236px;">Notifications</span>
<span class="a t" style="left:717.00px;top:945.87px;font-size:20px;line-height:20px;color:#444;letter-spacing:-0.349px;">Video Graphic Links</span>
<span class="a t" style="left:928.00px;top:945.87px;font-size:20px;line-height:20px;color:#444;letter-spacing:-0.237px;">Video Graphic</span>
<div class="a" style="left:1057px;top:944px;width:8.3px;height:28px;overflow:hidden;">
<span class="a t" style="left:1.50px;top:1.87px;font-size:20px;line-height:20px;color:#444;">R</span>
</div>
<div class="a " style="left:1168px;top:945px;width:721px;height:25px;background:#dcdcdc;"></div>
<div class="a " style="left:1168px;top:945px;width:25px;height:25px;background:#fff;border:1px solid #c6c6c6;"></div>
<div class="a " style="left:1193px;top:945px;width:71px;height:25px;background:#fff;border:1px solid #b9b9b9;"></div>
<div class="a " style="left:1864px;top:945px;width:25px;height:25px;background:#fff;border:1px solid #c6c6c6;"></div>
<div class="a " style="left:0px;top:976px;width:1920px;height:33px;background:#f1f1f1;"></div>
<span class="a t" style="left:8.00px;top:983.68px;font-size:15.5px;line-height:15.5px;color:#444;letter-spacing:-0.661px;">Ready</span>
<span class="a t" style="left:67.50px;top:983.68px;font-size:15.5px;line-height:15.5px;color:#444;letter-spacing:0.142px;">3 of 5530 records found</span>
<div class="a " style="left:1529px;top:976px;width:45px;height:32px;background:#c6c6c6;"></div>
<span class="a t" style="left:1872.00px;top:983.68px;font-size:15.5px;line-height:15.5px;color:#555;letter-spacing:-0.008px;">70%</span>
<svg class="a" style="left:0;top:941px" width="1920" height="68" viewBox="0 941 1920 68"><path d="M36.3 953.8V963L30.6 958.4Z" fill="#c6c6c6"/><path d="M65 953.8V963L70.5 958.4Z" fill="#0e5c2f"/><rect x="1074" y="959.8" width="3.2" height="3.2" fill="#0e5c2f"/><rect x="1080" y="959.8" width="3.2" height="3.2" fill="#0e5c2f"/><rect x="1086" y="959.8" width="3.2" height="3.2" fill="#0e5c2f"/><circle cx="1116" cy="958.9" r="9.4" fill="none" stroke="#767676" stroke-width="1.2"/><path d="M1110.8 958.9H1121.2M1116 953.7V964.1" stroke="#5a5a5a" stroke-width="1.6"/><rect x="1148" y="950.2" width="3" height="3" fill="#b2b2b2"/><rect x="1148" y="956.2" width="3" height="3" fill="#b2b2b2"/><rect x="1148" y="962.2" width="3" height="3" fill="#b2b2b2"/><path d="M1183 952.3V963L1177 957.6Z" fill="#666"/><path d="M1874 952.3V963L1880.4 957.6Z" fill="#666"/><g fill="none" stroke="#696969" stroke-width="1.2"><rect x="1542.8" y="982.8" width="17.6" height="17.6"/><path d="M1548.7 982.8V1000.4M1554.5 982.8V1000.4M1542.8 988.7H1560.4M1542.8 994.5H1560.4"/><rect x="1587.5" y="982.8" width="18" height="17.6"/><rect x="1591.5" y="986.6" width="10" height="10.4"/><path d="M1593.5 989.5H1599.5M1593.5 991.8H1599.5M1593.5 994.1H1599.5" stroke-width="1"/><rect x="1632.5" y="982.8" width="18" height="17.6"/><path d="M1638.3 982.8V990.8M1644.5 982.8V990.8H1632.5"/></g><path d="M1670 991.3H1681M1841.5 991.3H1855M1848.2 984.6V998" stroke="#555" stroke-width="2.1"/><path d="M1686 991.5H1836" stroke="#8f8f8f" stroke-width="1"/><path d="M1761.5 988V995.5" stroke="#8f8f8f" stroke-width="1"/><rect x="1735.2" y="983.3" width="5.6" height="16" fill="#5a5a5a"/></svg>
<!-- taskbar -->
<div class="a" style="left:0;top:1008px;width:1920px;height:72px;background:linear-gradient(90deg,#e2eaf8 0%,#dce5f5 22%,#d7dff3 42%,#d9def2 58%,#dfe7f4 75%,#e3eef6 88%,#e4eff6 100%);"></div>
<div class="a " style="left:0px;top:1008px;width:1920px;height:1px;background:#cdd8e8;"></div>
<div class="a" style="left:87px;top:1022px;width:328px;height:46px;border-radius:23px;background:#f6f9fd;border:1px solid #c6cfe1;box-shadow:0 1px 1px rgba(120,130,160,.25);"></div>
<span class="a t" style="left:142.50px;top:1035.22px;font-size:21px;line-height:21px;color:#555;letter-spacing:-1.007px;">Search</span>
<div class="a" style="left:512px;top:1019px;width:36px;height:24px;border-radius:12px;background:#f4f6fb;"></div>
<span class="a t" style="left:518.50px;top:1022.41px;font-size:17px;line-height:17px;color:#111;letter-spacing:-0.570px;">92°</span>
<div class="a" style="left:660px;top:1015px;width:20px;height:60px;border-radius:6px;background:#fde8e9;"></div>
<div class="a" style="left:665px;top:1015px;width:9px;height:60px;background:#d8dff3;"></div>
<div class="a" style="left:620px;top:1015px;width:51px;height:60px;border-radius:6px;background:#fde8e9;"></div>
<div class="a" style="left:924px;top:1015px;width:20px;height:60px;border-radius:6px;background:#fde8e9;"></div>
<div class="a" style="left:929px;top:1015px;width:9px;height:60px;background:#d8dff3;"></div>
<div class="a" style="left:884px;top:1015px;width:51px;height:60px;border-radius:6px;background:#fde8e9;"></div>
<div class="a" style="left:1250px;top:1017px;width:22px;height:57px;border-radius:6px;background:#e6ecf8;box-shadow:0 1px 1px rgba(110,120,150,.25);"></div>
<div class="a" style="left:1216px;top:1017px;width:50px;height:57px;border-radius:6px;background:#ecf1fb;box-shadow:0 1px 2px rgba(100,110,140,.35);"></div>
<svg class="a" style="left:0;top:1008px" width="1920" height="72" viewBox="0 1008 1920 72"><defs><linearGradient id="wl" gradientUnits="userSpaceOnUse" x1="31" y1="1028" x2="66" y2="1063"><stop offset="0" stop-color="#55ccf8"/><stop offset="1" stop-color="#0a6fd0"/></linearGradient><linearGradient id="tv" x1="0" y1="0" x2="1" y2="1"><stop offset="0" stop-color="#1c1c1c"/><stop offset="1" stop-color="#4a4a4a"/></linearGradient><linearGradient id="ch" x1=".1" y1="0" x2=".6" y2="1"><stop offset="0" stop-color="#9a6cb4"/><stop offset=".4" stop-color="#7479d6"/><stop offset="1" stop-color="#5355c8"/></linearGradient><radialGradient id="ch2" cx=".85" cy=".3" r=".5"><stop offset="0" stop-color="#7f97ea" stop-opacity=".9"/><stop offset="1" stop-color="#7f97ea" stop-opacity="0"/></radialGradient><linearGradient id="eg" x1="0" y1="0" x2="1" y2="1"><stop offset="0" stop-color="#2aa9e0"/><stop offset=".5" stop-color="#1b84d6"/><stop offset="1" stop-color="#0c4fa6"/></linearGradient><linearGradient id="eg2" x1="0" y1=".3" x2="1" y2=".1"><stop offset="0" stop-color="#1e9de0"/><stop offset=".45" stop-color="#2bc3c8"/><stop offset="1" stop-color="#7fdc52"/></linearGradient><linearGradient id="yl" x1="0" y1="0" x2="0" y2="1"><stop offset="0" stop-color="#fff06a"/><stop offset="1" stop-color="#f3c400"/></linearGradient><radialGradient id="gd" cx=".4" cy=".3" r=".8"><stop offset="0" stop-color="#fff07a"/><stop offset=".55" stop-color="#f7c313"/><stop offset="1" stop-color="#c98a00"/></radialGradient></defs><rect x="31" y="1028" width="16.6" height="16.6" rx="1.2" fill="url(#wl)"/><rect x="49" y="1028" width="16.6" height="16.6" rx="1.2" fill="url(#wl)"/><rect x="31" y="1046" width="16.6" height="16.6" rx="1.2" fill="url(#wl)"/><rect x="49" y="1046" width="16.6" height="16.6" rx="1.2" fill="url(#wl)"/><rect x="31" y="1028" width="34.6" height="34.6" fill="url(#wl)" opacity="0"/><circle cx="116" cy="1043.8" r="7.6" fill="none" stroke="#222" stroke-width="2"/><path d="M110.4 1049.4L105 1054.8" stroke="#222" stroke-width="2.4" stroke-linecap="round"/><rect x="434.3" y="1037.5" width="26.5" height="24" rx="2" fill="url(#tv)"/><rect x="443" y="1028.5" width="26.5" height="23.4" rx="2" fill="#f4f4f6" opacity=".82"/><path d="M566.2 1061.4C568.6 1057.6 568.6 1054.6 567.4 1051A16.8 16.8 0 1 1 576.2 1060.2C573 1060.4 570 1061.6 566.2 1061.4Z" fill="url(#ch)"/><circle cx="583.2" cy="1044.9" r="16.8" fill="url(#ch2)"/><rect x="573.3" y="1037.9" width="14.2" height="14.1" rx="2.6" fill="#fff"/><path d="M589 1042.7L593.2 1039.9V1050.7L589 1048Z" fill="#fff"/><rect x="651" y="1036.6" width="14.2" height="17" rx="1.6" fill="#fff" stroke="#0072c6" stroke-width="1.4"/><path d="M652.5 1042L656.8 1046.2L664.3 1039" fill="none" stroke="#0072c6" stroke-width="1.4"/><path d="M634 1032.3L652.8 1029V1060.7L634 1057.3Z" fill="#0072c6"/><ellipse cx="643.1" cy="1044.4" rx="4.1" ry="5.2" fill="none" stroke="#fff" stroke-width="2.3"/><rect x="646" y="1069.2" width="9" height="4.8" rx="2.4" fill="#c42b1c"/><path d="M716 1027.5C727 1027.5 734.3 1035 734.3 1044C734.3 1050 729 1053 724 1052C720.5 1051.3 720.5 1048 722.3 1046C724 1044 723 1039.5 716.5 1039.5C709 1039.5 705.5 1047 708.5 1054C711 1060 717.5 1063 724 1061.5C716 1065.5 705 1063 700.3 1055C694.5 1044 701.5 1027.5 716 1027.5Z" fill="url(#eg)"/><path d="M716 1027.5C727 1027.5 734.3 1035 734.3 1044C734.3 1050 729 1053 724 1052C720.5 1051.3 720.5 1048 722.3 1046C724 1044 723 1039.5 716.5 1039.5C708 1039.5 703 1044 700.5 1049.5C697 1038 705 1027.5 716 1027.5Z" fill="url(#eg2)"/><path d="M708.3 1050C708 1058 715 1064 724 1061.5C729 1060 732 1057 733.5 1054C729 1057 722 1057 718.5 1053C716 1050 716.3 1046.5 718 1044.5C713 1043.5 708.6 1045.5 708.3 1050Z" fill="#0d56a6"/><rect x="697.6" y="1051.5" width="18.5" height="11.5" rx="1.5" fill="#b8631a"/><rect x="697.6" y="1051.5" width="18.5" height="5.4" rx="1.5" fill="#e08a28"/><path d="M703.5 1051.5V1049.6H710V1051.5" fill="none" stroke="#7a4310" stroke-width="1.3"/><rect x="705.6" y="1055.6" width="2.4" height="2.4" fill="#ffd75e"/><rect x="712" y="1069.8" width="8.799999999999955" height="4" rx="2" fill="#8a8f98"/><path d="M763.8 1031.5Q763.8 1029.3 766 1029.3H776L779.5 1032.5H798.2Q800.5 1032.5 800.5 1034.8V1041H763.8Z" fill="#e9a31c"/><rect x="763.8" y="1033.8" width="36.7" height="28" rx="2" fill="#fcc93d"/><path d="M770 1061.8V1053.5Q770 1050.5 773 1050.5H791.5Q794.5 1050.5 794.5 1053.5V1061.8Z" fill="#1b7fd8"/><rect x="775.5" y="1054" width="13.5" height="2" rx="1" fill="#0b4f9a"/><rect x="778" y="1069.8" width="9" height="4" rx="2" fill="#8a8f98"/><circle cx="847.8" cy="1044.9" r="17.4" fill="#e6dcee"/><path d="M847.4 1030.3L860.6 1054H833.6Z" fill="#5b348b"/><path d="M843 1054.4V1042.6L852 1053V1041.2" fill="none" stroke="#e9e0f1" stroke-width="2.3"/><path d="M849 1041.6L852 1037.8L855 1041.6Z" fill="#5b348b"/><path d="M923.4 1041.2H929.6Q931 1041.2 931 1042.6V1050Q931 1055.7 926.5 1055.7Q923.4 1055.7 922.6 1053Z" fill="#5059c9"/><circle cx="914.7" cy="1034.1" r="5.4" fill="#7b83eb"/><path d="M906 1041.2H922.9Q924.3 1041.2 924.3 1042.6V1052Q924.3 1060.8 915.2 1060.8Q906 1060.8 906 1052Z" fill="#7b83eb"/><rect x="896" y="1035.8" width="18" height="18.2" rx="1.6" fill="#4a52bd"/><path d="M900.6 1041H909M904.9 1041V1049.7" stroke="#fff" stroke-width="2.4"/><circle cx="930.5" cy="1034.4" r="8.1" fill="#5b4a6a" opacity=".55"/><circle cx="930.5" cy="1034.4" r="7.6" fill="#fff"/><circle cx="930.5" cy="1034.4" r="6.4" fill="#c50f1f"/><rect x="910" y="1069.2" width="9.3" height="4.8" rx="2.4" fill="#c42b1c"/><path d="M970.2 1041C964 1041.5 961.5 1046 963.5 1050.5L966 1057.5L968.5 1055L967 1050L971 1053.5L973 1059.5L975.5 1058L973.5 1051.5L969 1046.5Z" fill="#f08432"/><ellipse cx="980.2" cy="1042.8" rx="10.8" ry="8" fill="#e8553c"/><path d="M971 1037.5C972 1031 978 1029 984.5 1028L986.5 1030.5L989.5 1033.5L990.5 1038C986 1036 977 1036 971 1037.5Z" fill="#9d9d9d"/><path d="M978 1031.5L985.5 1028.5L987.5 1033L981 1034.5Z" fill="#c7c7c7"/><ellipse cx="978.6" cy="1040.6" rx="6.2" ry="5" fill="#f3dccb"/><path d="M970.5 1041L979.5 1035.2L983.5 1036.5L980 1041.5L978.6 1044.6Z" fill="#1e1a1a"/><path d="M980 1038L981.5 1044" stroke="#fff" stroke-width="1.2"/><path d="M986.5 1035.5C990 1036.5 991.5 1041 990.5 1045.5L987 1047Z" fill="#f2742e"/><path d="M984.3 1047.2L990.5 1045.5L996.8 1047.8L997.4 1052.5L994 1056L990.6 1056.8L984.6 1054Z" fill="#f58424"/><path d="M985.5 1049.8L993.5 1048.8M986 1051.4L990 1051" stroke="#fbe6cf" stroke-width="1"/><rect x="976.3" y="1069.8" width="8.700000000000045" height="4" rx="2" fill="#8a8f98"/><rect x="1033.8" y="1031" width="24.4" height="18.2" fill="url(#yl)" stroke="#9c9c9c" stroke-width="1.6"/><path d="M1033.2 1052.2H1058.8L1062.4 1058.6H1029.4Z" fill="#cfcfcf" stroke="#a2a2a2" stroke-width="1"/><rect x="1042" y="1069.8" width="8.799999999999955" height="4" rx="2" fill="#8a8f98"/><rect x="1098" y="1029.5" width="28.3" height="29.5" rx="2" fill="#62cbea"/><rect x="1098" y="1029.5" width="28.3" height="5" rx="2" fill="#39a9d2"/><rect x="1098" y="1057" width="28.3" height="6" rx="1.5" fill="#b4501e"/><rect x="1098" y="1057" width="28.3" height="2.2" fill="#e9e2d6"/><rect x="1101.4" y="1026.8" width="2.2" height="5.2" rx="1.1" fill="#0f7fa8"/><rect x="1107.7" y="1026.8" width="2.2" height="5.2" rx="1.1" fill="#0f7fa8"/><rect x="1114.0" y="1026.8" width="2.2" height="5.2" rx="1.1" fill="#0f7fa8"/><rect x="1120.3000000000002" y="1026.8" width="2.2" height="5.2" rx="1.1" fill="#0f7fa8"/><rect x="1102.5" y="1039" width="19.5" height="1.7" fill="#0f7fa8"/><rect x="1102.5" y="1043.5" width="19.5" height="1.7" fill="#0f7fa8"/><rect x="1102.5" y="1048" width="19.5" height="1.7" fill="#0f7fa8"/><rect x="1102.5" y="1052.5" width="19.5" height="1.7" fill="#0f7fa8"/><rect x="1108" y="1069.8" width="9" height="4" rx="2" fill="#8a8f98"/><circle cx="1177.5" cy="1045" r="17.8" fill="#fbc116"/><path d="M1177.5 1045L1162.1 1036.1A17.8 17.8 0 0 1 1192.9 1036.1Z" fill="#e33b2e"/><path d="M1177.5 1045L1162.1 1036.1A17.8 17.8 0 0 0 1177.5 1062.8Z" fill="#2da94f"/><path d="M1162.1 1036.1A17.8 17.8 0 0 1 1192.9 1036.1L1195.1 1043H1177.5Z" fill="#e33b2e"/><path d="M1169.7 1049.5L1162.1 1036.1A17.8 17.8 0 0 0 1179.0 1062.7L1185.3 1049.5Z" fill="#2da94f"/><circle cx="1177.5" cy="1045" r="9" fill="#fff"/><circle cx="1177.5" cy="1045" r="7" fill="#4285f4"/><rect x="1173.8" y="1069.8" width="9.200000000000045" height="4" rx="2" fill="#8a8f98"/><rect x="1245" y="1032.7" width="14.2" height="23.8" rx="1.8" fill="#fff" stroke="#217346" stroke-width="1.5"/><rect x="1247" y="1036.3" width="2.6" height="1.8" fill="#1a6a3c"/><rect x="1251.2" y="1036.3" width="4.9" height="1.8" fill="#1a6a3c"/><rect x="1247" y="1040" width="2.6" height="1.8" fill="#1a6a3c"/><rect x="1251.2" y="1040" width="4.9" height="1.8" fill="#1a6a3c"/><rect x="1247" y="1043.7" width="2.6" height="1.8" fill="#1a6a3c"/><rect x="1251.2" y="1043.7" width="4.9" height="1.8" fill="#1a6a3c"/><rect x="1247" y="1047.4" width="2.6" height="1.8" fill="#1a6a3c"/><rect x="1251.2" y="1047.4" width="4.9" height="1.8" fill="#1a6a3c"/><rect x="1247" y="1051.1" width="2.6" height="1.8" fill="#1a6a3c"/><rect x="1251.2" y="1051.1" width="4.9" height="1.8" fill="#1a6a3c"/><path d="M1228 1032.3L1246.9 1029V1060.8L1228 1057.7Z" fill="#217346"/><path d="M1233.2 1038.4L1241.4 1050.4M1241.4 1038.4L1233.2 1050.4" stroke="#fff" stroke-width="2.6"/><rect x="1232" y="1069" width="24" height="5" rx="2.5" fill="#0078d4"/><circle cx="1310" cy="1045" r="16.6" fill="url(#gd)" stroke="#d9a400" stroke-width=".8"/><path d="M1300.5 1037.5Q1310 1034.5 1319.5 1037.5Q1319 1051 1310 1056.5Q1301 1051 1300.5 1037.5Z" fill="#ffe23a" stroke="#3a3205" stroke-width="1.6"/><path d="M1306.6 1037V1053.5M1310 1036.5V1056M1313.4 1037V1053.5" stroke="#3a3205" stroke-width="1.4"/><rect x="1306.3" y="1069.8" width="8.700000000000045" height="4" rx="2" fill="#8a8f98"/><path d="M1572.3 1048.3L1581 1039.6L1589.7 1048.3" fill="none" stroke="#1a1a1a" stroke-width="1.6"/><path d="M1610.5 1051.5Q1605 1051.5 1605 1046.5Q1605 1042.5 1609.3 1042C1610.5 1038 1614 1036.3 1617 1036.3C1620.5 1036.3 1623 1038.5 1624 1041.5C1627 1041.5 1629 1043.8 1629 1046.5Q1629 1051.5 1624 1051.5Z" fill="#1b8ae0"/><path d="M1609.3 1042C1610.5 1038 1614 1036.3 1617 1036.3C1620.5 1036.3 1623 1038.5 1624 1041.5L1613 1047Z" fill="#0b5fb8"/><path d="M1605.4 1048.5L1618 1042.8L1628.6 1048.5Q1628 1051.5 1624 1051.5H1610.5Q1606 1051.5 1605.4 1048.5Z" fill="#2fa7ee"/><g fill="none" stroke="#1a1a1a" stroke-width="1.5"><path d="M1663.5 1036.3H1649Q1647.7 1036.3 1647.7 1037.6V1048.2Q1647.7 1049.5 1649 1049.5H1666.5"/><path d="M1655.5 1049.5V1054.5M1660.5 1049.5V1054.5M1652 1054.8H1664"/><rect x="1665.5" y="1032.7" width="4.6" height="7.8" rx="2"/><path d="M1667.8 1040.5V1055.5"/></g><g fill="none" stroke="#1a1a1a" stroke-width="1.5" stroke-linejoin="round"><path d="M1683.7 1040.3H1687.5L1692.5 1035.5V1052L1687.5 1047.3H1683.7Z"/><path d="M1695.8 1040C1697.5 1042.3 1697.5 1045.3 1695.8 1047.6M1699 1037C1702 1041 1702 1046.6 1699 1050.6M1702.3 1034.2C1706.5 1039.5 1706.5 1048 1702.3 1053.4"/></g><rect x="1724.6" y="1038.3" width="14.6" height="12.2" rx="2.4" fill="none" stroke="#1a1a1a" stroke-width="1.4"/><rect x="1727" y="1040.7" width="9.8" height="7.4" rx="1" fill="#1a1a1a"/><rect x="1739.3" y="1041.5" width="3" height="5.6" rx="1.2" fill="#1a1a1a"/><path d="M1719.3 1038.5V1036.3H1721V1033H1722.6V1036.3H1725.2V1033H1726.8V1036.3H1728.3V1038.5Q1728.3 1041.5 1725 1042V1050.5H1722.8V1042Q1719.3 1041.5 1719.3 1038.5Z" fill="#1a1a1a" stroke="#e2ecf6" stroke-width=".6"/><circle cx="1878" cy="1044" r="11.9" fill="#0c6fca"/></svg>
<span class="a t" style="left:1040.20px;top:1031.81px;font-size:17px;line-height:17px;color:#0a0ae0;font-weight:bold;transform:scaleX(1.14);transform-origin:0 0;">T</span>
<span class="a t" style="left:1787.70px;top:1025.01px;font-size:17px;line-height:17px;color:#1a1a1a;letter-spacing:-0.330px;">1:09 PM</span>
<span class="a t" style="left:1766.20px;top:1047.81px;font-size:17px;line-height:17px;color:#1a1a1a;letter-spacing:0.763px;">9/22/2023</span>
<span class="a t" style="left:1873.69px;top:1036.48px;font-size:15.5px;line-height:15.5px;color:#fff;">8</span>
</body></html>
